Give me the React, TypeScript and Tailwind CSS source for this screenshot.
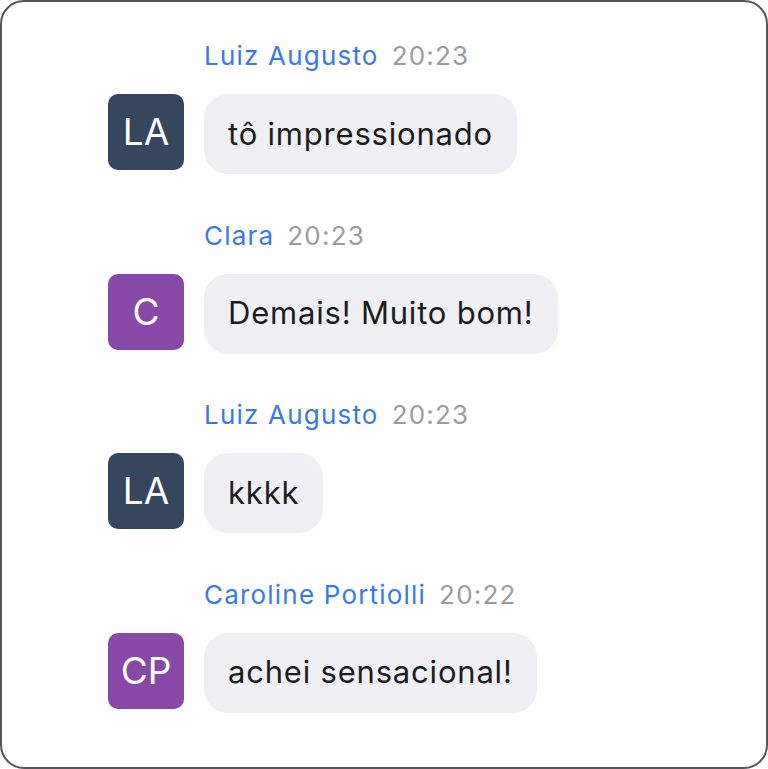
const messages = [
  { name: 'Luiz Augusto', time: '20:23', initials: 'LA', color: 'bg-[#35465e]', text: 'tô impressionado' },
  { name: 'Clara', time: '20:23', initials: 'C', color: 'bg-[#8748a8]', text: 'Demais! Muito bom!' },
  { name: 'Luiz Augusto', time: '20:23', initials: 'LA', color: 'bg-[#35465e]', text: 'kkkk' },
  { name: 'Caroline Portiolli', time: '20:22', initials: 'CP', color: 'bg-[#8748a8]', text: 'achei sensacional!' },
];

export default function App() {
  return (
    <div className="w-[768px] h-[769px] bg-white" style={{ fontFamily: 'Inter, "Noto Sans", sans-serif' }}>
      <div className="w-full h-full border-2 border-[#55555b] rounded-[24px] pl-[106px] pt-[38px] flex flex-col gap-[45.5px]">
        {messages.map((m, i) => (
          <div key={i} className="flex flex-col gap-[22px]">
            <div className="pl-[96px] h-[32px] flex items-center gap-[13px] text-[26px] leading-[32px] tracking-[1.2px]">
              <span className="text-[#3b78e7]">{m.name}</span>
              <span className="text-[#9b9b9b]">{m.time}</span>
            </div>
            <div className="flex items-start gap-[20px]">
              <div className={`w-[76px] h-[76px] rounded-[10px] ${m.color} text-white text-[37px] flex items-center justify-center`}>
                {m.initials}
              </div>
              <div className="h-[80px] px-[24px] rounded-[24px] bg-[#efeff4] text-[#1c1c1e] text-[31px] tracking-[0.8px] flex items-center">
                {m.text}
              </div>
            </div>
          </div>
        ))}
      </div>
    </div>
  );
}
